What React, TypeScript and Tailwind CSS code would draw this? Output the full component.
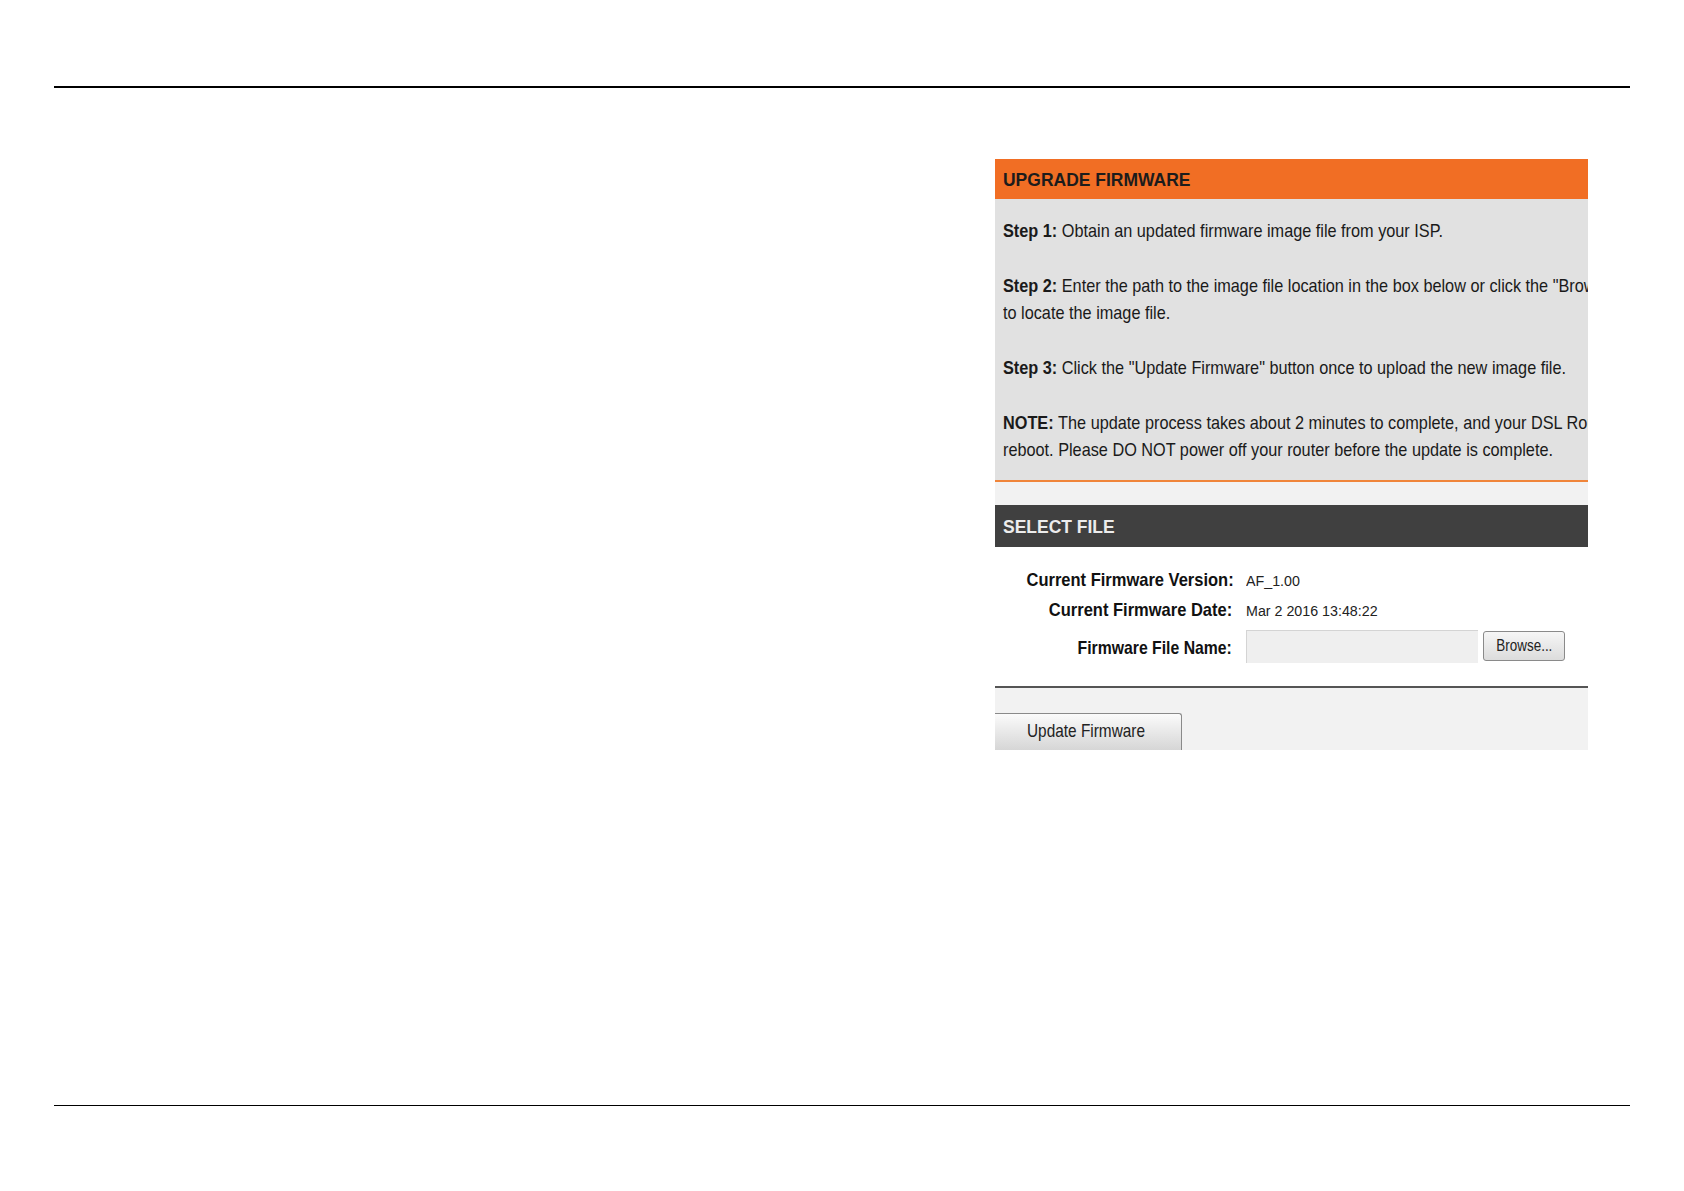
const font = "font-['Liberation_Sans',Arial,sans-serif]";

function StepLine({ label, lines }: { label: string; lines: string[] }) {
  return (
    <div className="mb-[27.4px] last:mb-0">
      {lines.map((line, i) => (
        <div key={i} className="origin-left scale-x-[0.856] whitespace-nowrap">
          {i === 0 && <span className="font-bold">{label} </span>}
          {line}
        </div>
      ))}
    </div>
  );
}

function InfoRow({
  label,
  children,
  tall,
  squeeze = "scale-x-[0.868]",
}: {
  label: string;
  children: React.ReactNode;
  tall?: boolean;
  squeeze?: string;
}) {
  return (
    <div className={`flex gap-[14px] ${tall ? "h-[37px] items-end" : "h-[30px] items-center"}`}>
      <div className="w-[237px] shrink-0 whitespace-nowrap text-right text-[19px] font-bold text-[#111]">
        <span className={`inline-block origin-right ${squeeze}`}>{label}</span>
      </div>
      {children}
    </div>
  );
}

function Value({ children }: { children: React.ReactNode }) {
  return (
    <span className="inline-block origin-left scale-x-[0.92] whitespace-nowrap text-[15.5px] text-[#222]">
      {children}
    </span>
  );
}

export default function App() {
  return (
    <div className={`min-h-[1191px] w-[1684px] bg-white px-[54px] pt-[86px] ${font}`}>
      <div className="h-[2px] bg-black" />

      <div className="ml-[941px] mt-[71px] w-[593px] overflow-hidden">
        {/* upgrade firmware */}
        <div className="h-[40px] whitespace-nowrap bg-[#f16e24] pl-[8px] pt-[1px] text-[19px] font-bold leading-[40px] text-[#1c1c1c]">
          <span className="inline-block origin-left scale-x-[0.92]">UPGRADE FIRMWARE</span>
        </div>
        <div className="border-b-2 border-[#f0853a] bg-[#e1e1e1] pb-[16px] pl-[8px] pt-[18px] text-[19px] leading-[27.4px] text-[#1a1a1a]">
          <StepLine label="Step 1:" lines={["Obtain an updated firmware image file from your ISP."]} />
          <StepLine
            label="Step 2:"
            lines={[
              'Enter the path to the image file location in the box below or click the "Browse" button',
              "to locate the image file.",
            ]}
          />
          <StepLine label="Step 3:" lines={['Click the "Update Firmware" button once to upload the new image file.']} />
          <StepLine
            label="NOTE:"
            lines={[
              "The update process takes about 2 minutes to complete, and your DSL Router will",
              "reboot. Please DO NOT power off your router before the update is complete.",
            ]}
          />
        </div>
        <div className="h-[23px] bg-[#f2f2f2]" />

        {/* select file */}
        <div className="h-[42px] whitespace-nowrap bg-[#404040] pl-[8px] pt-[1px] text-[19px] font-bold leading-[42px] text-[#ececec]">
          <span className="inline-block origin-left scale-x-[0.92]">SELECT FILE</span>
        </div>
        <div className="bg-white pb-[23px] pt-[19px]">
          <InfoRow label="Current Firmware Version:">
            <Value>AF_1.00</Value>
          </InfoRow>
          <InfoRow label="Current Firmware Date:">
            <Value>Mar 2 2016 13:48:22</Value>
          </InfoRow>
          <InfoRow label="Firmware File Name:" tall squeeze="scale-x-[0.83]">
            <div className="flex items-center gap-[5px]">
              <div className="h-[33px] w-[232px] border-l border-t border-[#d4d4d4] bg-[#efefef]" />
              <button className="h-[30px] w-[82px] rounded-[3px] border border-[#8a8a8a] bg-gradient-to-b from-[#f6f6f6] to-[#dcdcdc] text-[16px] text-[#222]">
                <span className="inline-block scale-x-[0.84]">Browse...</span>
              </button>
            </div>
          </InfoRow>
        </div>
        <div className="h-[2px] bg-[#555]" />
        <div className="h-[62px] bg-[#f2f2f2] pt-[25px]">
          <button className="h-[37px] w-[187px] whitespace-nowrap rounded-tr-[3px] border-r border-t border-[#8a8a8a] bg-gradient-to-b from-[#fbfbfb] to-[#d6d6d6] pl-[32px] text-left text-[19px] text-[#222]">
            <span className="inline-block origin-left scale-x-[0.81]">Update Firmware</span>
          </button>
        </div>
      </div>

      <div className="mt-[355px] h-px bg-black" />
    </div>
  );
}
